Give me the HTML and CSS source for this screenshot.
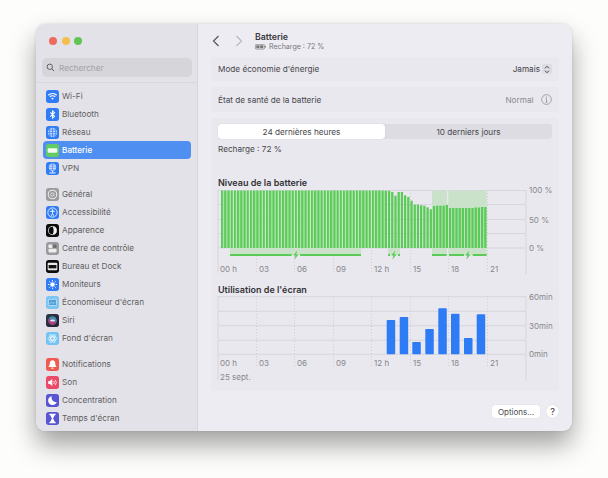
FILE: index.html
```html
<!DOCTYPE html>
<html lang="fr">
<head>
<meta charset="utf-8">
<title>Batterie</title>
<link rel="stylesheet" href="styles.css">
</head>
<body>
<div class="window">
  <aside class="sidebar">
    <div class="traffic"><span class="dot red"></span><span class="dot yellow"></span><span class="dot green"></span></div>
    <div class="search">
      <svg class="search-icon" viewBox="0 0 10 10"><circle cx="4.2" cy="4.2" r="3" fill="none" stroke="#555" stroke-width="1"/><path d="M6.5 6.5 9 9" stroke="#555" stroke-width="1.1"/></svg>
      <span>Rechercher</span>
    </div>
    <nav class="nav">
      <ul class="group">
        <li class="item"><svg class="icon" viewBox="0 0 14 14"><rect width="14" height="14" rx="3" fill="#2f7cf6"/><path d="M2.5 5.6a6.4 6.4 0 0 1 9 0M4.1 7.4a4.1 4.1 0 0 1 5.8 0" fill="none" stroke="#fff" stroke-width="1.3"/><path d="M5.6 9a2 2 0 0 1 2.8 0L7 10.6z" fill="#fff"/></svg>Wi-Fi</li>
        <li class="item"><svg class="icon" viewBox="0 0 14 14"><rect width="14" height="14" rx="3" fill="#2f7cf6"/><path d="M4.6 4.8 9.2 9 7 11V3l2.2 2L4.6 9.2" fill="none" stroke="#fff" stroke-width="1.1"/></svg>Bluetooth</li>
        <li class="item"><svg class="icon" viewBox="0 0 14 14"><rect width="14" height="14" rx="3" fill="#2f7cf6"/><circle cx="7" cy="7" r="5" fill="#bcd6fb"/><path d="M2 7h10M7 2v10M3 4.4h8M3 9.6h8M4.6 2.6c-1.4 3-1.4 6 0 8.8M9.4 2.6c1.4 3 1.4 6 0 8.8" fill="none" stroke="#2f7cf6" stroke-width=".7"/></svg>Réseau</li>
        <li class="item active"><svg class="icon" viewBox="0 0 14 14"><rect width="14" height="14" rx="3" fill="#62cb62"/><rect x="1.8" y="4.6" width="10.4" height="4.8" rx="1.2" fill="#f2fbf2"/></svg>Batterie</li>
        <li class="item"><svg class="icon" viewBox="0 0 14 14"><rect width="14" height="14" rx="3" fill="#2f7cf6"/><circle cx="7" cy="5.6" r="3.9" fill="#cfe1fc"/><path d="M3.2 5.6h7.6M7 1.8v7.6M4.4 3.2h5.2M4.4 8h5.2" stroke="#2f7cf6" stroke-width=".6"/><path d="M7 9.5v2M3.6 11.8h6.8" stroke="#fff" stroke-width="1"/></svg>VPN</li>
      </ul>
      <ul class="group">
        <li class="item"><svg class="icon" viewBox="0 0 14 14"><rect width="14" height="14" rx="3" fill="#9b9b9e"/><circle cx="7" cy="7" r="4.6" fill="none" stroke="#e8e8e8" stroke-width="1.2"/><circle cx="7" cy="7" r="1.8" fill="none" stroke="#e8e8e8" stroke-width="1"/></svg>Général</li>
        <li class="item"><svg class="icon" viewBox="0 0 14 14"><rect width="14" height="14" rx="3" fill="#2f7cf6"/><circle cx="7" cy="7" r="5" fill="none" stroke="#fff" stroke-width=".9"/><circle cx="7" cy="4.4" r=".9" fill="#fff"/><path d="M4.4 5.8h5.2M7 5.8v2.4M7 8.2 5.6 10.6M7 8.2l1.4 2.4" fill="none" stroke="#fff" stroke-width=".9"/></svg>Accessibilité</li>
        <li class="item"><svg class="icon" viewBox="0 0 14 14"><rect width="14" height="14" rx="3" fill="#0c0c0c"/><circle cx="7" cy="7" r="4.4" fill="#f2f2f2"/><path d="M7 2.6a4.4 4.4 0 0 0 0 8.8c1.6-1.4 1.6-7.4 0-8.8z" fill="#0c0c0c"/><circle cx="7" cy="7" r="4.4" fill="none" stroke="#f2f2f2" stroke-width=".7"/></svg>Apparence</li>
        <li class="item"><svg class="icon" viewBox="0 0 14 14"><rect width="14" height="14" rx="3" fill="#9b9b9e"/><rect x="2.6" y="2.8" width="4.2" height="3.6" rx="1" fill="#ececec"/><rect x="7.6" y="2.8" width="3.8" height="3.6" rx="1" fill="#6f6f72"/><rect x="2.6" y="7.4" width="8.8" height="3.8" rx="1.2" fill="#ececec"/></svg>Centre de contrôle</li>
        <li class="item"><svg class="icon" viewBox="0 0 14 14"><rect width="14" height="14" rx="3" fill="#0c0c0c"/><rect x="1.8" y="3" width="10.4" height="8" rx="1" fill="#e9e9e9"/><rect x="2.8" y="5.4" width="8.4" height="3.6" fill="#111"/></svg>Bureau et Dock</li>
        <li class="item"><svg class="icon" viewBox="0 0 14 14"><rect width="14" height="14" rx="3" fill="#2f7cf6"/><circle cx="7" cy="7" r="2.4" fill="#fff"/><path d="M7 2.2v1.4M7 10.4v1.4M2.2 7h1.4M10.4 7h1.4M3.6 3.6l1 1M9.4 9.4l1 1M3.6 10.4l1-1M9.4 4.6l1-1" stroke="#fff" stroke-width="1"/></svg>Moniteurs</li>
        <li class="item"><svg class="icon" viewBox="0 0 14 14"><rect width="14" height="14" rx="3" fill="#79c6f2"/><rect x="2.6" y="3.6" width="8.8" height="6.6" rx=".8" fill="#4f9fd8" stroke="#e4f3fc" stroke-width=".7"/><path d="M4 8.4c1.4-2 2-2 3-1s1.6.6 2.6-.6" fill="none" stroke="#d4ecfa" stroke-width=".7"/></svg>Économiseur d'écran</li>
        <li class="item"><svg class="icon" viewBox="0 0 14 14"><defs><linearGradient id="siri" x1="0" y1="0" x2="1" y2="1"><stop offset="0" stop-color="#2c3a4a"/><stop offset="1" stop-color="#2a1d33"/></linearGradient></defs><rect width="14" height="14" rx="3" fill="url(#siri)"/><circle cx="7" cy="7" r="4.6" fill="#3f8fb0"/><path d="M2.6 7c1.6-2.6 3.4-2.4 4.4 0s2.8 1.6 4.4 0c-.6 3-2.4 4.6-4.4 4.6S3 10 2.6 7z" fill="#b83a76"/><ellipse cx="7" cy="7" rx="2.6" ry="1.2" fill="#dff0fa"/></svg>Siri</li>
        <li class="item"><svg class="icon" viewBox="0 0 14 14"><rect width="14" height="14" rx="3" fill="#72c4f4"/><g fill="none" stroke="#e2f3fd" stroke-width=".9"><circle cx="7" cy="7" r="1.6"/><ellipse cx="7" cy="7" rx="4.8" ry="2"/><ellipse cx="7" cy="7" rx="4.8" ry="2" transform="rotate(60 7 7)"/><ellipse cx="7" cy="7" rx="4.8" ry="2" transform="rotate(120 7 7)"/></g></svg>Fond d'écran</li>
      </ul>
      <ul class="group">
        <li class="item"><svg class="icon" viewBox="0 0 14 14"><rect width="14" height="14" rx="3" fill="#ef5b4f"/><path d="M7 2.4c2 0 3 1.5 3 3.4 0 2 .8 3 1.6 3.8H2.4c.8-.8 1.6-1.8 1.6-3.8 0-1.900 1-3.400 3-3.400z" fill="#fff"/><rect x="5.8" y="10.3" width="2.4" height="1.3" rx=".6" fill="#fff"/></svg>Notifications</li>
        <li class="item"><svg class="icon" viewBox="0 0 14 14"><rect width="14" height="14" rx="3" fill="#eb4a68"/><path d="M2.4 5.4h1.800l2.600-2.200v7.600L4.200 8.600H2.400z" fill="#fff"/><path d="M8.200 5.400a2.200 2.200 0 0 1 0 3.200M9.800 4.200a4 4 0 0 1 0 5.600" fill="none" stroke="#fff" stroke-width=".9"/></svg>Son</li>
        <li class="item"><svg class="icon" viewBox="0 0 14 14"><rect width="14" height="14" rx="3" fill="#5a55d2"/><path d="M6.200 2.400a4.800 4.800 0 1 0 5.400 6.400A5 5 0 0 1 6.200 2.400z" fill="#fff"/></svg>Concentration</li>
        <li class="item"><svg class="icon" viewBox="0 0 14 14"><rect width="14" height="14" rx="3" fill="#5a55d2"/><path d="M3.600 2.600h6.800M3.600 11.400h6.800" stroke="#fff" stroke-width="1.200"/><path d="M4.400 3.200h5.200L7.600 7l2 3.800H4.400L6.400 7z" fill="#fff"/></svg>Temps d'écran</li>
      </ul>
    </nav>
  </aside>
  <main class="main">
    <header class="toolbar">
      <svg class="nav-arrow" viewBox="0 0 8 12"><path d="M6.500 1 1.500 6l5 5" fill="none" stroke="#55555a" stroke-width="1.200"/></svg>
      <svg class="nav-arrow dim" viewBox="0 0 8 12"><path d="M1.500 1l5 5-5 5" fill="none" stroke="#b9b9bd" stroke-width="1.200"/></svg>
      <div class="heading">
        <h1>Batterie</h1>
        <p><svg class="mini-batt" viewBox="0 0 12 6"><rect x=".4" y=".4" width="10" height="5.200" rx="1.200" fill="none" stroke="#777" stroke-width=".7"/><rect x="1.400" y="1.400" width="3.500" height="3.200" fill="#777"/><rect x="5.600" y="1.400" width="3.500" height="3.200" fill="#777"/><rect x="11" y="2" width=".8" height="2" fill="#777"/></svg>Recharge : 72 %</p>
      </div>
    </header>
    <div class="content">
      <section class="card row row-a">
        <span>Mode économie d'énergie</span>
        <span class="value">Jamais<span class="stepper"><svg viewBox="0 0 6 9"><path d="M1 3.300 3 1.300l2 2M1 5.700l2 2 2-2" fill="none" stroke="#333" stroke-width=".9"/></svg></span></span>
      </section>
      <section class="card row row-b">
        <span>État de santé de la batterie</span>
        <span class="value muted">Normal<svg class="info" viewBox="0 0 12 12"><circle cx="6" cy="6" r="5.300" fill="none" stroke="#8a8a8e" stroke-width=".8"/><path d="M6 5.200v3.600M4.900 8.900h2.200M4.900 5.200H6" fill="none" stroke="#8a8a8e" stroke-width=".8"/><circle cx="5.900" cy="3.300" r=".7" fill="#8a8a8e"/></svg></span>
      </section>
      <section class="card detail">
        <div class="segments"><span class="seg on">24 dernières heures</span><span class="seg">10 derniers jours</span></div>
        <p class="recharge">Recharge : 72 %</p>
        <h2 class="chart-title">Niveau de la batterie</h2>
        <svg class="chart chart-battery" viewBox="0 0 330 92">
          <defs><pattern id="bars" width="3.210" height="60" patternUnits="userSpaceOnUse" x="3" y="0"><rect x="0" width="2.300" height="60" fill="#5acb56"/><rect x="2.300" width=".910" height="60" fill="#cdeaca"/></pattern></defs>
          <g class="grid"><path d="M0 .5H308M0 14.500H308M0 29.500H308M0 43.500H308M0 58H308"/></g>
          <path class="axis" d="M0 0V83M308 0V84"/>
          <path class="dotted" d="M38.500 0V84M76.500 0V84M115.500 0V84M153.500 0V84M192.500 0V84M230.500 0V84M269.500 0V84"/>
          <rect x="214" y="0.500" width="15" height="57.500" class="band"/><rect x="230.500" y="0.500" width="38.200" height="57.500" class="band"/>
          <rect x="3" y="0.500" width="163.710" height="57.500" fill="url(#bars)"/>
          <g fill="#5acb56">
            <rect x="166.710" width="2.300" y=".7" height="57.300"/><rect x="169.920" width="2.300" y=".7" height="57.300"/><rect x="173.130" width="2.300" y="2" height="56"/><rect x="176.340" width="2.300" y="5.700" height="52.300"/><rect x="179.550" width="2.300" y="2" height="56"/><rect x="182.760" width="2.300" y="2" height="56"/><rect x="185.970" width="2.300" y="5.300" height="52.700"/><rect x="189.180" width="2.300" y="7" height="51"/><rect x="192.390" width="2.300" y="10.700" height="47.300"/><rect x="195.600" width="2.300" y="14.700" height="43.300"/><rect x="198.810" width="2.300" y="14.700" height="43.300"/><rect x="202.020" width="2.300" y="15.300" height="42.700"/><rect x="205.230" width="2.300" y="15.700" height="42.300"/><rect x="208.440" width="2.300" y="17.300" height="40.700"/><rect x="211.650" width="2.300" y="19.300" height="38.700"/><rect x="214.860" width="2.300" y="16" height="42"/><rect x="218.070" width="2.300" y="15.700" height="42.300"/><rect x="221.280" width="2.300" y="15.700" height="42.300"/><rect x="224.490" width="2.300" y="15.700" height="42.300"/><rect x="227.700" width="2.300" y="15" height="43"/><rect x="230.910" width="2.300" y="18" height="40"/><rect x="234.120" width="2.300" y="18" height="40"/><rect x="237.330" width="2.300" y="18" height="40"/><rect x="240.540" width="2.300" y="18" height="40"/><rect x="243.750" width="2.300" y="18" height="40"/><rect x="246.960" width="2.300" y="18" height="40"/><rect x="250.170" width="2.300" y="18" height="40"/><rect x="253.380" width="2.300" y="18" height="40"/><rect x="256.590" width="2.300" y="17.500" height="40.500"/><rect x="259.800" width="2.300" y="17.500" height="40.500"/><rect x="263.010" width="2.300" y="17" height="41"/><rect x="266.220" width="2.300" y="17" height="41"/>
          </g>
          <g class="band"><rect x="12" y="58" width="131" height="7"/><rect x="170" y="58" width="12" height="7"/><rect x="214" y="58" width="15" height="7"/><rect x="230.500" y="58" width="38.200" height="7"/></g>
          <g fill="#5acb56"><rect x="12" y="64" width="61.700" height="2"/><rect x="82" y="64" width="61" height="2"/><rect x="170" y="64" width="2" height="2"/><rect x="180" y="64" width="2" height="2"/><rect x="214" y="64" width="14.700" height="2"/><rect x="231" y="64" width="15" height="2"/><rect x="254.700" y="64" width="14" height="2"/>
            <path d="M79.300 60.500 75.200 65.600h2.300L76.200 69.800l4.400-5.300h-2.400z"/><path d="M177.300 60.500 173.200 65.600h2.300L174.200 69.800l4.400-5.300h-2.400z"/><path d="M251.300 60.500 247.200 65.600h2.300L248.200 69.800l4.400-5.300h-2.400z"/></g>
          <g class="tick"><text x="2" y="82">00 h</text><text x="41" y="82">03</text><text x="79" y="82">06</text><text x="118" y="82">09</text><text x="156" y="82">12 h</text><text x="195" y="82">15</text><text x="233" y="82">18</text><text x="272" y="82">21</text><text x="311" y="3">100 %</text><text x="311" y="32.500">50 %</text><text x="311" y="61">0 %</text></g>
        </svg>
        <h2 class="chart-title usage">Utilisation de l'écran</h2>
        <svg class="chart chart-screen" viewBox="0 0 330 86">
          <g class="grid"><path d="M0 .7H308M0 15.300H308M0 29.700H308M0 44.300H308M0 58.300H308"/></g>
          <path class="axis" d="M0 0V84M308 0V85"/>
          <path class="dotted" d="M38.500 0V70M76.500 0V70M115.500 0V70M153.500 0V70M192.500 0V70M230.500 0V70M269.500 0V70"/>
          <g fill="#2e7bf6"><rect x="168.700" y="24" width="8.500" height="34.300" rx=".8"/><rect x="181.700" y="21" width="8.500" height="37.300" rx=".8"/><rect x="194.300" y="46" width="8.500" height="12.300" rx=".8"/><rect x="207.300" y="33" width="8.500" height="25.300" rx=".8"/><rect x="220.300" y="12.300" width="8.500" height="46" rx=".8"/><rect x="233" y="17.700" width="8.500" height="40.600" rx=".8"/><rect x="246" y="42" width="8.500" height="16.300" rx=".8"/><rect x="258.700" y="18.300" width="8.500" height="40" rx=".8"/></g>
          <g class="tick"><text x="2" y="70">00 h</text><text x="41" y="70">03</text><text x="79" y="70">06</text><text x="118" y="70">09</text><text x="156" y="70">12 h</text><text x="195" y="70">15</text><text x="233" y="70">18</text><text x="272" y="70">21</text><text x="2" y="83.500">25 sept.</text><text x="311" y="3.700">60min</text><text x="311" y="32.700">30min</text><text x="311" y="61.300">0min</text></g>
        </svg>
      </section>
      <footer class="actions">
        <button class="btn">Options...</button>
        <button class="help">?</button>
      </footer>
    </div>
  </main>
</div>
</body>
</html>
```

FILE: styles.css
```css
* { box-sizing: border-box; }
html, body { margin: 0; padding: 0; }
body {
  width: 608px;
  height: 478px;
  overflow: hidden;
  background: #fdfdfc;
  font-family: "Inter", "Liberation Sans", sans-serif;
  font-size: 8.2px;
  color: #47474b;
  padding: 24px 36px 0;
}
ul { list-style: none; margin: 0; padding: 0; }
h1, h2, p { margin: 0; }
svg { display: block; }

.window {
  display: flex;
  width: 536px;
  height: 407px;
  border-radius: 9px;
  overflow: hidden;
  background: #edecf2;
  box-shadow: 0 14px 26px rgba(0, 0, 0, .36), 0 0 3px rgba(0, 0, 0, .12);
}

.sidebar {
  width: 162px;
  flex: none;
  background: #e3e2e8;
  border-right: 1px solid #d8d7dd;
  padding: 0 5px 0 6px;
}
.traffic { display: flex; gap: 4.6px; padding: 12.5px 0 0 7px; height: 34px; }
.dot { width: 8px; height: 8px; border-radius: 50%; }
.red { background: #ec6a5e; }
.yellow { background: #f4bf4f; }
.green { background: #61c554; }

.search {
  display: flex;
  align-items: center;
  gap: 4px;
  height: 19px;
  padding-left: 4px;
  border-radius: 5px;
  background: #d6d5da;
  color: #a2a1a6;
}
.search-icon { width: 9px; height: 9px; }

.nav {
  margin: 5px -5px 0 -6px;
  padding: 4px 6px 0 7px;
  border-top: 1px solid #d8d7dd;
}
.group { margin-bottom: 8px; }
.item {
  display: flex;
  align-items: center;
  gap: 3px;
  height: 18px;
  padding-left: 3px;
  border-radius: 4px;
  color: #5f5f63;
}
.item.active { background: #4f8ff2; color: #fff; font-weight: 500; }
.icon { width: 13px; height: 13px; flex: none; }

.main { flex: 1; min-width: 0; display: flex; flex-direction: column; }
.toolbar { display: flex; align-items: center; height: 33px; padding: 0 0 0 14px; flex: none; }
.nav-arrow { width: 8px; height: 12px; margin-right: 15px; }
.nav-arrow.dim { margin-right: 12px; }
.heading { margin-top: 2px; }
.heading h1 { font-size: 8.8px; font-weight: 600; color: #3a3a3e; line-height: 11px; }
.heading p { display: flex; align-items: center; gap: 3px; font-size: 7.1px; color: #77777b; line-height: 10px; }
.mini-batt { width: 11px; height: 5.5px; }

.content { padding: 0 13px; flex: 1; }
.card { background: #e9e8ee; border-radius: 4px; }
.row {
  display: flex;
  justify-content: space-between;
  align-items: center;
  padding: 0 7px;
  margin-bottom: 6px;
}
.row-a { height: 24px; }
.row-b { height: 25px; }
.value { display: flex; align-items: center; gap: 2px; color: #444448; }
.value.muted { color: #8a8a8e; gap: 7.5px; }
.stepper { width: 10px; height: 10px; background: #dddce2; border-radius: 2px; display: flex; align-items: center; justify-content: center; }
.stepper svg { width: 6px; height: 9px; }
.info { width: 11px; height: 11px; }

.detail { height: 273px; padding: 6px 7px 0; }
.segments { display: flex; height: 15px; background: #dddce2; border-radius: 3px; }
.seg { flex: 1; display: flex; align-items: center; justify-content: center; }
.seg.on { flex: 0 0 167px; background: #fff; border-radius: 3px; box-shadow: 0 0 1px rgba(0, 0, 0, .25); }
.recharge { margin-top: 4px; line-height: 12px; }
.chart-title { margin-top: 23px; font-size: 9px; font-weight: 600; line-height: 10px; color: #333337; }
.chart-title.usage { margin-top: 3px; }
.chart { width: 330px; margin-top: 2px; overflow: visible; }
.chart-battery { height: 92px; }
.chart-screen { height: 86px; margin-top: 1px; }
.grid path { stroke: #d7d6dc; stroke-width: 1; fill: none; }
.axis { stroke: #d7d6dc; stroke-width: 1; fill: none; }
.dotted { stroke: #d0cfd5; stroke-width: 1; stroke-dasharray: 1 2; fill: none; }
.band { fill: #c9e2c9; }
.tick text { font-size: 8px; fill: #87878b; }

.actions { display: flex; justify-content: flex-end; align-items: center; gap: 6px; padding: 14px 0 0; }
.btn {
  height: 13px;
  width: 48px;
  padding: 0;
  border: 0;
  border-radius: 3px;
  background: #fff;
  font: 8px "Inter", "Liberation Sans", sans-serif;
  color: #4a4a4e;
  box-shadow: 0 0 1px rgba(0, 0, 0, .2);
}
.help {
  width: 13px;
  height: 13px;
  padding: 0;
  border: 0;
  border-radius: 50%;
  background: #fff;
  font: 500 9px "Inter", "Liberation Sans", sans-serif;
  color: #444;
  box-shadow: 0 0 1px rgba(0, 0, 0, .2);
}
```
